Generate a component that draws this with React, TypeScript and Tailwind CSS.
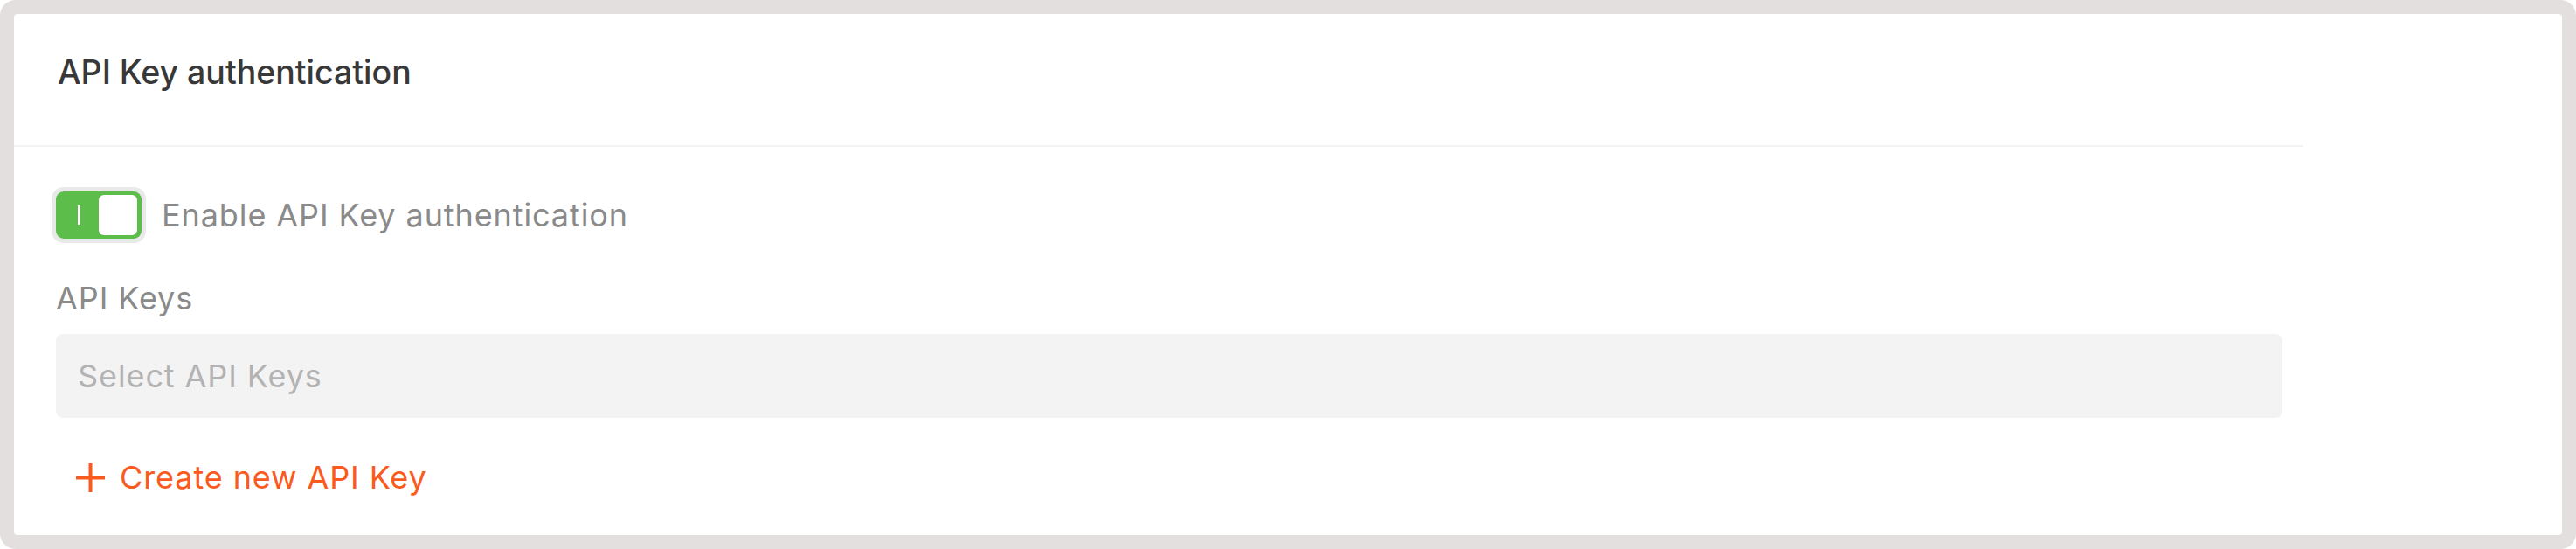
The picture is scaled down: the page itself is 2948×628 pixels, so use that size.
const Toggle = () => {
    return (
        <div className="relative h-[54px] w-[98px] shrink-0 rounded-[9px] bg-[#5cbd4b] shadow-[0_0_0_5px_#e9e9e9]">
            <span className="absolute left-[25px] top-[16px] h-[22px] w-[3px] bg-white" />
            <span className="absolute right-[5px] top-[4px] h-[46px] w-[44px] rounded-[6px] bg-white" />
        </div>
    );
};

const PlusIcon = () => (
    <svg width="33" height="33" viewBox="0 0 33 33" className="shrink-0">
        <path d="M16.5 0v33M0 16.5h33" stroke="#fa5a1e" strokeWidth="4" />
    </svg>
);

const App = () => {
    return (
        <div className="h-[628px] w-[2948px] bg-white font-['Inter','Noto_Sans',sans-serif]">
            <div className="h-full rounded-[18px] bg-[#e2dfde] p-4">
                <div className="h-full rounded-[4px] bg-white">
                    {/* Header */}
                    <div className="h-[150px] w-[2620px] pl-[50px] pt-[45px]">
                        <h2 className="text-[37.5px] font-medium leading-[44px] text-[#383838]">API Key authentication</h2>
                    </div>
                    <div className="h-[2px] w-[2620px] bg-[#f3f3f3]" />

                    {/* Body */}
                    <div className="w-[2596px] pl-[48px] pt-[51px] text-[36px] leading-[40px] tracking-[0.9px]">
                        <div className="flex items-center gap-[23px]">
                            <Toggle />
                            <span className="text-[#8a8a8a]">Enable API Key authentication</span>
                        </div>

                        <p className="mt-[48px] text-[#8a8a8a]">API Keys</p>

                        <div className="mt-[21px] flex h-[96px] items-center rounded-[8px] bg-[#f3f3f3] pl-[25px]">
                            <span className="text-[#b3b3b3]">Select API Keys</span>
                        </div>

                        <button className="mt-[48px] flex items-center gap-[17px] pl-[23px] text-[#fa5a1e]">
                            <PlusIcon />
                            Create new API Key
                        </button>
                    </div>
                </div>
            </div>
        </div>
    );
};

export default App;
